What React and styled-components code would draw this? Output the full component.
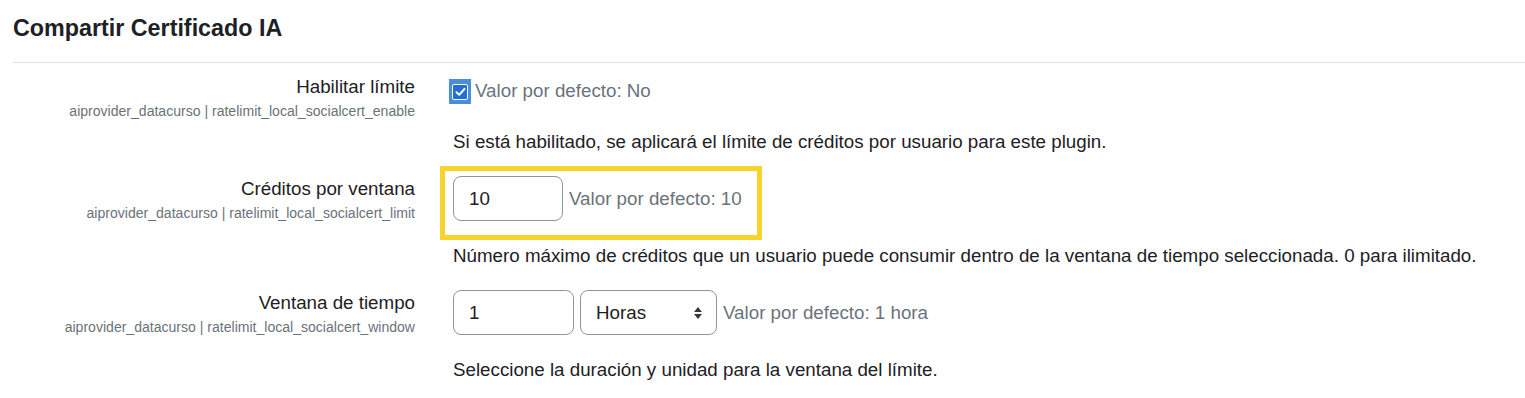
import React from 'react';
import styled, { createGlobalStyle } from 'styled-components';

const GlobalStyle = createGlobalStyle`
  body {
    margin: 0;
    background: #ffffff;
    font-family: "Liberation Sans", Arial, sans-serif;
    color: #1d2125;
  }
`;

const Page = styled.div`
  padding: 0 0 0 13px;
`;

const Title = styled.h3`
  margin: 0;
  padding-top: 13px;
  font-size: 23.3px;
  font-weight: 700;
  line-height: 30px;
  color: #1d2125;
`;

const Rule = styled.hr`
  margin: 19px 0 0 0;
  border: 0;
  border-top: 1px solid #dee2e6;
`;

const Settings = styled.div`
  padding-top: 11px;
`;

const Row = styled.div`
  display: grid;
  grid-template-columns: 402px 1fr;
  column-gap: 38px;
  padding-bottom: ${(p) => p.$after}px;
`;

const LabelCol = styled.div`
  text-align: right;
`;

const Label = styled.div`
  font-size: 18.75px;
  line-height: 26px;
  color: #1d2125;
`;

const Key = styled.div`
  font-size: 14.05px;
  line-height: 22px;
  color: #6a737b;
`;

const Controls = styled.div`
  position: relative;
  display: inline-flex;
  align-items: center;
  gap: 6px;
  min-height: ${(p) => p.$height}px;
`;

const Field = styled.div`
  display: block;
`;

const Input = styled.div`
  box-sizing: border-box;
  width: ${(p) => p.$width}px;
  height: 45px;
  padding: 0 15px;
  display: flex;
  align-items: center;
  border: 1px solid #8f959e;
  border-radius: 8px;
  font-size: 18.75px;
  color: #1d2125;
`;

const Select = styled(Input)`
  justify-content: space-between;
  padding-right: 13px;
`;

const Default = styled.span`
  font-size: 18.75px;
  color: #6a737b;
`;

const Description = styled.div`
  margin-top: 23px;
  font-size: 18.75px;
  line-height: 24px;
  color: #1d2125;
`;

const Highlight = styled.span`
  position: absolute;
  top: -10px;
  left: -13px;
  right: -20px;
  bottom: -19px;
  border: 5px solid #f6d32d;
  pointer-events: none;
`;

const CheckRing = styled.span`
  display: inline-flex;
  align-items: center;
  justify-content: center;
  width: 22px;
  height: 25px;
  margin-left: -4px;
  margin-right: -2px;
  margin-top: 2px;
  background: #4a8fd8;
`;

const CheckBox = styled.span`
  box-sizing: border-box;
  width: 16px;
  height: 16px;
  border: 1px solid #ffffff;
  border-radius: 2px;
  background: #1f6fd6;
  display: flex;
  align-items: center;
  justify-content: center;
`;

const Setting = ({ label, settingKey, description, height, after = 22, children }) => (
  <Row $after={after}>
    <LabelCol>
      <Label>{label}</Label>
      <Key>{settingKey}</Key>
    </LabelCol>
    <Field>
      <Controls $height={height}>{children}</Controls>
      <Description>{description}</Description>
    </Field>
  </Row>
);

const App = () => (
  <>
    <GlobalStyle />
    <Page>
      <Title>Compartir Certificado IA</Title>
      <Rule />
      <Settings>
        <Setting
          label="Habilitar límite"
          settingKey="aiprovider_datacurso | ratelimit_local_socialcert_enable"
          description="Si está habilitado, se aplicará el límite de créditos por usuario para este plugin."
          height={33}
        >
          <CheckRing>
            <CheckBox>
              <svg width="11" height="10" viewBox="0 0 11 10">
                <path d="M1.5 5.2 L4.2 7.8 L9.5 1.8" fill="none" stroke="#fff" strokeWidth="2" strokeLinecap="round" strokeLinejoin="round" />
              </svg>
            </CheckBox>
          </CheckRing>
          <Default>Valor por defecto: No</Default>
        </Setting>
        <Setting
          label="Créditos por ventana"
          settingKey="aiprovider_datacurso | ratelimit_local_socialcert_limit"
          description="Número máximo de créditos que un usuario puede consumir dentro de la ventana de tiempo seleccionada. 0 para ilimitado."
          height={45}
        >
          <Input $width={110}>10</Input>
          <Default>Valor por defecto: 10</Default>
          <Highlight />
        </Setting>
        <Setting
          label="Ventana de tiempo"
          settingKey="aiprovider_datacurso | ratelimit_local_socialcert_window"
          description="Seleccione la duración y unidad para la ventana del límite."
          height={45}
        >
          <Input $width={121}>1</Input>
          <Select $width={137}>
            <span>Horas</span>
            <svg width="10" height="14" viewBox="0 0 10 14">
              <path d="M5 1 L9 6 H1 Z" fill="#343a40" />
              <path d="M5 13 L9 8 H1 Z" fill="#343a40" />
            </svg>
          </Select>
          <Default>Valor por defecto: 1 hora</Default>
        </Setting>
      </Settings>
    </Page>
  </>
);

export default App;
